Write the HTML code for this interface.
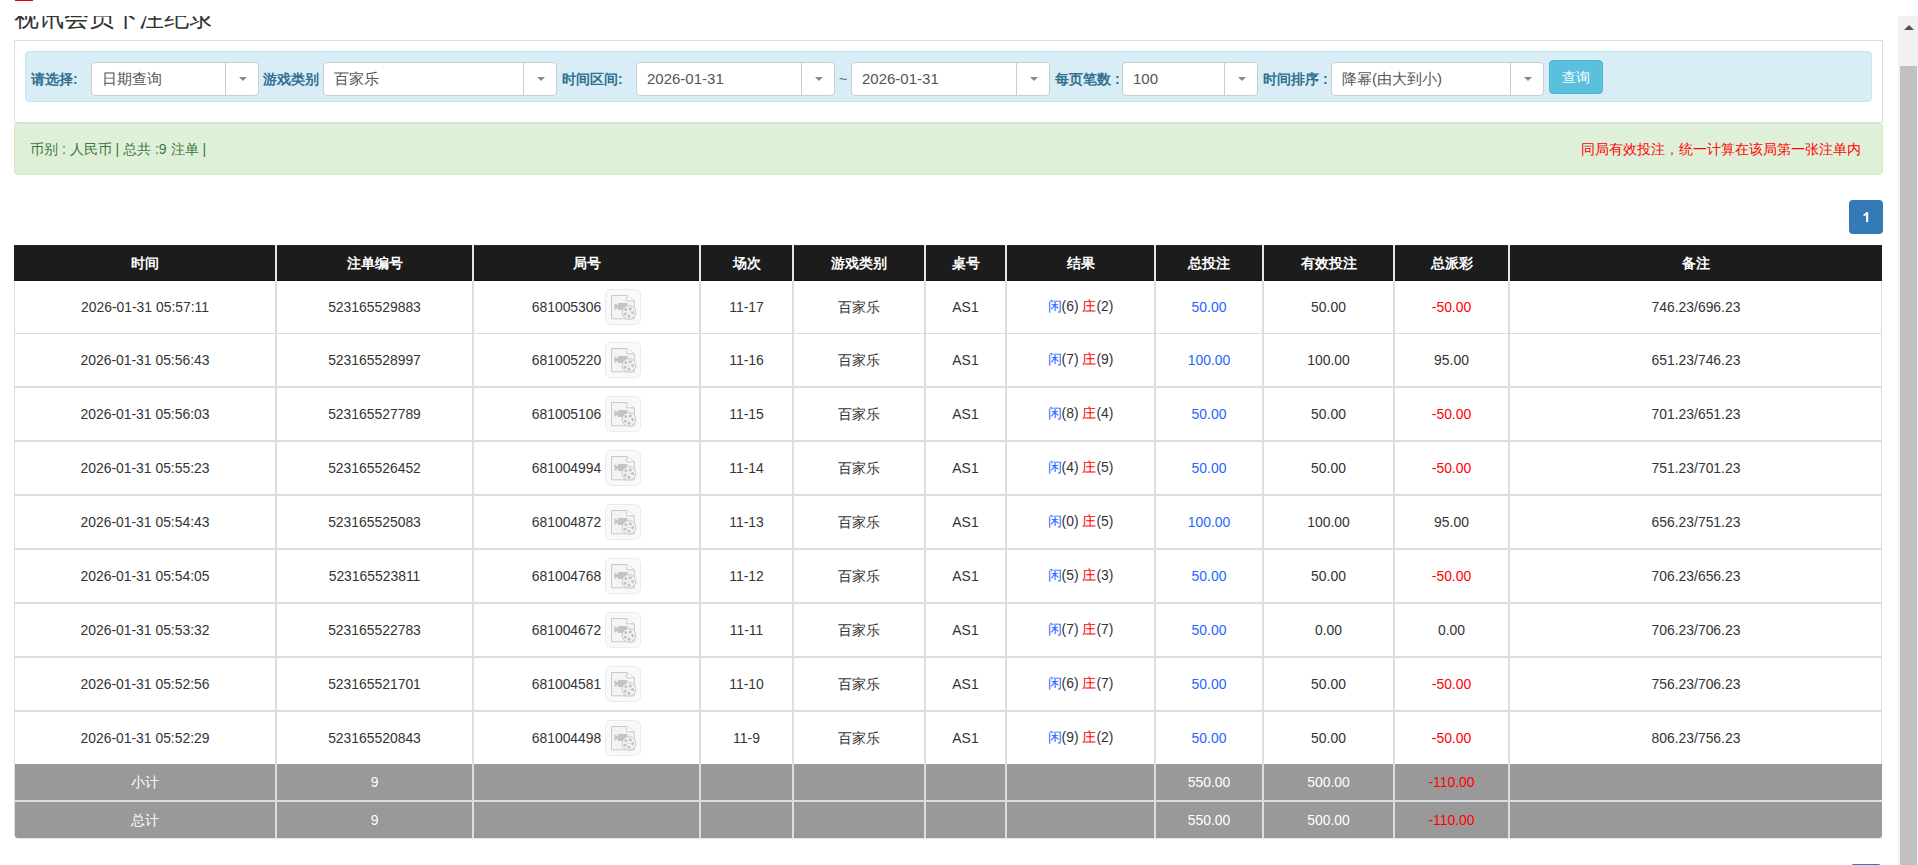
<!DOCTYPE html>
<html><head><meta charset="utf-8"><title>视讯会员下注纪录</title>
<style>
*{box-sizing:border-box;margin:0;padding:0}
html,body{width:1918px;height:865px;overflow:hidden;background:#fff}
body{position:relative;font-family:"Liberation Sans", sans-serif;color:#333}
.a{position:absolute}
.sel{position:absolute;top:62px;height:34px;background:#fff;border:1px solid #ccc;border-radius:4px}
.sel .t{position:absolute;left:10px;top:0;line-height:31px;font-size:15px;color:#555;white-space:nowrap}
.sel .d{position:absolute;top:0;bottom:0;width:1px;background:#ccc}
.sel .ar{position:absolute;top:14px;width:0;height:0;border-left:4px solid transparent;border-right:4px solid transparent;border-top:4px solid #888}
.lbl{position:absolute;top:62px;line-height:34px;font-size:14px;font-weight:bold;color:#31708f;white-space:nowrap}
.c{position:absolute;display:flex;align-items:center;justify-content:center;font-size:13.9px;white-space:nowrap;color:#333}
.h{color:#fff;font-weight:bold;font-size:14px;padding-top:2px}
.g{color:#fff}
.bl{color:#1f66ff}
.rd{color:#f00}
.vl{position:absolute;width:2px;background:#ddd}
.hl{position:absolute;background:#ddd}
</style></head><body>

<div class="a" style="left:15px;top:0;width:18px;height:1px;background:#d9001b"></div>
<div class="a" style="left:0;top:16px;width:1898px;height:30px;overflow:hidden"><div class="a" style="left:14px;top:-19px;font-size:25px;line-height:40px;color:#333;font-weight:300;white-space:nowrap">视讯会员下注纪录</div></div>
<div class="a" style="left:14px;top:40px;width:1869px;height:83px;border:1px solid #ddd;background:#fff"></div>
<div class="a" style="left:25px;top:51px;width:1847px;height:51px;border:1px solid #bce8f1;background:#d9edf7;border-radius:4px"></div>
<div class="lbl" style="left:31px">请选择:</div>
<div class="lbl" style="left:263px">游戏类别</div>
<div class="lbl" style="left:562px">时间区间:</div>
<div class="lbl" style="left:1055px">每页笔数 :</div>
<div class="lbl" style="left:1263px">时间排序 :</div>
<div class="lbl" style="left:839px;font-weight:normal;font-size:14px">~</div>
<div class="sel" style="left:91px;width:168px"><span class="t">日期查询</span><span class="d" style="left:133px"></span><span class="ar" style="left:147px"></span></div>
<div class="sel" style="left:323px;width:234px"><span class="t">百家乐</span><span class="d" style="left:199px"></span><span class="ar" style="left:213px"></span></div>
<div class="sel" style="left:636px;width:199px"><span class="t">2026-01-31</span><span class="d" style="left:164px"></span><span class="ar" style="left:178px"></span></div>
<div class="sel" style="left:851px;width:199px"><span class="t">2026-01-31</span><span class="d" style="left:164px"></span><span class="ar" style="left:178px"></span></div>
<div class="sel" style="left:1122px;width:136px"><span class="t">100</span><span class="d" style="left:101px"></span><span class="ar" style="left:115px"></span></div>
<div class="sel" style="left:1331px;width:213px"><span class="t">降幂(由大到小)</span><span class="d" style="left:178px"></span><span class="ar" style="left:192px"></span></div>
<div class="a" style="left:1549px;top:60px;width:54px;height:34px;background:#5bc0de;border:1px solid #46b8da;border-radius:4px;color:#fff;font-size:14px;line-height:32px;text-align:center">查询</div>
<div class="a" style="left:14px;top:123px;width:1869px;height:52px;background:#dff0d8;border:1px solid #d6e9c6;border-radius:4px"></div>
<div class="a" style="left:30px;top:123px;line-height:52px;font-size:14px;color:#3c763d;white-space:nowrap">币别 : 人民币 | 总共 :9 注单 |</div>
<div class="a" style="right:57px;top:123px;line-height:52px;font-size:14px;color:#f00;white-space:nowrap">同局有效投注，统一计算在该局第一张注单内</div>
<div class="a" style="left:1849px;top:200px;width:34px;height:34px;background:#337ab7;border-radius:4px"><svg class="a" style="left:0;top:0" width="34" height="34"><path d="M17.2 12h2v10h-2.1v-7.1c-0.8 0.7-1.6 1.1-2.6 1.4v-1.9c1.2-0.5 2.1-1.3 2.7-2.4z" fill="#fff"/></svg></div>
<div class="a" style="left:14px;top:245px;width:1868px;height:36px;background:#1c1c1c;border-top:1px solid #2a2a2a;border-bottom:1px solid #151515"></div>
<div class="vl" style="left:275px;top:245px;height:36px;background:#e6e6e6"></div>
<div class="vl" style="left:472px;top:245px;height:36px;background:#e6e6e6"></div>
<div class="vl" style="left:699px;top:245px;height:36px;background:#e6e6e6"></div>
<div class="vl" style="left:792px;top:245px;height:36px;background:#e6e6e6"></div>
<div class="vl" style="left:924px;top:245px;height:36px;background:#e6e6e6"></div>
<div class="vl" style="left:1005px;top:245px;height:36px;background:#e6e6e6"></div>
<div class="vl" style="left:1154px;top:245px;height:36px;background:#e6e6e6"></div>
<div class="vl" style="left:1262px;top:245px;height:36px;background:#e6e6e6"></div>
<div class="vl" style="left:1393px;top:245px;height:36px;background:#e6e6e6"></div>
<div class="vl" style="left:1508px;top:245px;height:36px;background:#e6e6e6"></div>
<div class="c h" style="left:15px;top:245px;width:260px;height:36px">时间</div>
<div class="c h" style="left:277px;top:245px;width:195px;height:36px">注单编号</div>
<div class="c h" style="left:474px;top:245px;width:225px;height:36px">局号</div>
<div class="c h" style="left:701px;top:245px;width:91px;height:36px">场次</div>
<div class="c h" style="left:794px;top:245px;width:130px;height:36px">游戏类别</div>
<div class="c h" style="left:926px;top:245px;width:79px;height:36px">桌号</div>
<div class="c h" style="left:1007px;top:245px;width:147px;height:36px">结果</div>
<div class="c h" style="left:1156px;top:245px;width:106px;height:36px">总投注</div>
<div class="c h" style="left:1264px;top:245px;width:129px;height:36px">有效投注</div>
<div class="c h" style="left:1395px;top:245px;width:113px;height:36px">总派彩</div>
<div class="c h" style="left:1510px;top:245px;width:372px;height:36px">备注</div>
<div class="a" style="left:14px;top:281px;width:1868px;height:483px;border-left:1px solid #ddd;border-right:1px solid #ddd;background:#fff"></div>
<div class="hl" style="left:14px;top:333px;width:1868px;height:1px"></div>
<div class="hl" style="left:14px;top:386px;width:1868px;height:2px"></div>
<div class="hl" style="left:14px;top:440px;width:1868px;height:2px"></div>
<div class="hl" style="left:14px;top:494px;width:1868px;height:2px"></div>
<div class="hl" style="left:14px;top:548px;width:1868px;height:2px"></div>
<div class="hl" style="left:14px;top:602px;width:1868px;height:2px"></div>
<div class="hl" style="left:14px;top:656px;width:1868px;height:2px"></div>
<div class="hl" style="left:14px;top:710px;width:1868px;height:2px"></div>
<div class="vl" style="left:275px;top:281px;height:483px"></div>
<div class="vl" style="left:472px;top:281px;height:483px"></div>
<div class="vl" style="left:699px;top:281px;height:483px"></div>
<div class="vl" style="left:792px;top:281px;height:483px"></div>
<div class="vl" style="left:924px;top:281px;height:483px"></div>
<div class="vl" style="left:1005px;top:281px;height:483px"></div>
<div class="vl" style="left:1154px;top:281px;height:483px"></div>
<div class="vl" style="left:1262px;top:281px;height:483px"></div>
<div class="vl" style="left:1393px;top:281px;height:483px"></div>
<div class="vl" style="left:1508px;top:281px;height:483px"></div>
<div class="c" style="left:15px;top:281px;width:260px;height:52px"><span style="display:flex;align-items:center">2026-01-31 05:57:11</span></div>
<div class="c" style="left:277px;top:281px;width:195px;height:52px"><span style="display:flex;align-items:center">523165529883</span></div>
<div class="c" style="left:474px;top:281px;width:225px;height:52px"><span style="display:flex;align-items:center"><span>681005306</span><span style="display:inline-block;width:4px"></span><svg width="36" height="36" viewBox="0 0 36 36" style="display:block"><rect x="0.5" y="0.5" width="35" height="35" rx="5" fill="#f9f9f9" stroke="#ebebeb"/>
<path d="M6.5 6.5h15.3l7.5 5.3v18h-22.8z" fill="#f4f4f4" stroke="#c9c9c9"/>
<path d="M21.8 6.5v5.3h7.5" fill="#fdfdfd" stroke="#c9c9c9"/>
<path d="M9.5 14.2L13 16.6V13.9H22.4V21H13V18.8L9.5 21z" fill="#c4c4c4"/>
<circle cx="24" cy="23.4" r="6.8" fill="#f4f4f4" stroke="#c9c9c9"/>
<circle cx="20.9" cy="20.6" r="1.6" fill="#c4c4c4"/><circle cx="25.3" cy="19.9" r="1.6" fill="#c4c4c4"/><circle cx="27.6" cy="23.6" r="1.6" fill="#c4c4c4"/><circle cx="20.2" cy="25.1" r="1.6" fill="#c4c4c4"/><circle cx="24" cy="27.2" r="1.6" fill="#c4c4c4"/><circle cx="23.5" cy="23.4" r="0.6" fill="#c4c4c4"/>
</svg></span></div>
<div class="c" style="left:701px;top:281px;width:91px;height:52px"><span style="display:flex;align-items:center">11-17</span></div>
<div class="c" style="left:794px;top:281px;width:130px;height:52px"><span style="display:flex;align-items:center"><span style="padding-top:1px">百家乐</span></span></div>
<div class="c" style="left:926px;top:281px;width:79px;height:52px"><span style="display:flex;align-items:center">AS1</span></div>
<div class="c" style="left:1007px;top:281px;width:147px;height:52px"><span style="display:flex;align-items:center"><span><span class="bl">闲</span>(6) <span class="rd">庄</span>(2)</span></span></div>
<div class="c" style="left:1156px;top:281px;width:106px;height:52px"><span style="display:flex;align-items:center"><span class="bl">50.00</span></span></div>
<div class="c" style="left:1264px;top:281px;width:129px;height:52px"><span style="display:flex;align-items:center">50.00</span></div>
<div class="c" style="left:1395px;top:281px;width:113px;height:52px"><span style="display:flex;align-items:center"><span class="rd">-50.00</span></span></div>
<div class="c" style="left:1510px;top:281px;width:372px;height:52px"><span style="display:flex;align-items:center">746.23/696.23</span></div>
<div class="c" style="left:15px;top:334px;width:260px;height:52px"><span style="display:flex;align-items:center">2026-01-31 05:56:43</span></div>
<div class="c" style="left:277px;top:334px;width:195px;height:52px"><span style="display:flex;align-items:center">523165528997</span></div>
<div class="c" style="left:474px;top:334px;width:225px;height:52px"><span style="display:flex;align-items:center"><span>681005220</span><span style="display:inline-block;width:4px"></span><svg width="36" height="36" viewBox="0 0 36 36" style="display:block"><rect x="0.5" y="0.5" width="35" height="35" rx="5" fill="#f9f9f9" stroke="#ebebeb"/>
<path d="M6.5 6.5h15.3l7.5 5.3v18h-22.8z" fill="#f4f4f4" stroke="#c9c9c9"/>
<path d="M21.8 6.5v5.3h7.5" fill="#fdfdfd" stroke="#c9c9c9"/>
<path d="M9.5 14.2L13 16.6V13.9H22.4V21H13V18.8L9.5 21z" fill="#c4c4c4"/>
<circle cx="24" cy="23.4" r="6.8" fill="#f4f4f4" stroke="#c9c9c9"/>
<circle cx="20.9" cy="20.6" r="1.6" fill="#c4c4c4"/><circle cx="25.3" cy="19.9" r="1.6" fill="#c4c4c4"/><circle cx="27.6" cy="23.6" r="1.6" fill="#c4c4c4"/><circle cx="20.2" cy="25.1" r="1.6" fill="#c4c4c4"/><circle cx="24" cy="27.2" r="1.6" fill="#c4c4c4"/><circle cx="23.5" cy="23.4" r="0.6" fill="#c4c4c4"/>
</svg></span></div>
<div class="c" style="left:701px;top:334px;width:91px;height:52px"><span style="display:flex;align-items:center">11-16</span></div>
<div class="c" style="left:794px;top:334px;width:130px;height:52px"><span style="display:flex;align-items:center"><span style="padding-top:1px">百家乐</span></span></div>
<div class="c" style="left:926px;top:334px;width:79px;height:52px"><span style="display:flex;align-items:center">AS1</span></div>
<div class="c" style="left:1007px;top:334px;width:147px;height:52px"><span style="display:flex;align-items:center"><span><span class="bl">闲</span>(7) <span class="rd">庄</span>(9)</span></span></div>
<div class="c" style="left:1156px;top:334px;width:106px;height:52px"><span style="display:flex;align-items:center"><span class="bl">100.00</span></span></div>
<div class="c" style="left:1264px;top:334px;width:129px;height:52px"><span style="display:flex;align-items:center">100.00</span></div>
<div class="c" style="left:1395px;top:334px;width:113px;height:52px"><span style="display:flex;align-items:center">95.00</span></div>
<div class="c" style="left:1510px;top:334px;width:372px;height:52px"><span style="display:flex;align-items:center">651.23/746.23</span></div>
<div class="c" style="left:15px;top:388px;width:260px;height:52px"><span style="display:flex;align-items:center">2026-01-31 05:56:03</span></div>
<div class="c" style="left:277px;top:388px;width:195px;height:52px"><span style="display:flex;align-items:center">523165527789</span></div>
<div class="c" style="left:474px;top:388px;width:225px;height:52px"><span style="display:flex;align-items:center"><span>681005106</span><span style="display:inline-block;width:4px"></span><svg width="36" height="36" viewBox="0 0 36 36" style="display:block"><rect x="0.5" y="0.5" width="35" height="35" rx="5" fill="#f9f9f9" stroke="#ebebeb"/>
<path d="M6.5 6.5h15.3l7.5 5.3v18h-22.8z" fill="#f4f4f4" stroke="#c9c9c9"/>
<path d="M21.8 6.5v5.3h7.5" fill="#fdfdfd" stroke="#c9c9c9"/>
<path d="M9.5 14.2L13 16.6V13.9H22.4V21H13V18.8L9.5 21z" fill="#c4c4c4"/>
<circle cx="24" cy="23.4" r="6.8" fill="#f4f4f4" stroke="#c9c9c9"/>
<circle cx="20.9" cy="20.6" r="1.6" fill="#c4c4c4"/><circle cx="25.3" cy="19.9" r="1.6" fill="#c4c4c4"/><circle cx="27.6" cy="23.6" r="1.6" fill="#c4c4c4"/><circle cx="20.2" cy="25.1" r="1.6" fill="#c4c4c4"/><circle cx="24" cy="27.2" r="1.6" fill="#c4c4c4"/><circle cx="23.5" cy="23.4" r="0.6" fill="#c4c4c4"/>
</svg></span></div>
<div class="c" style="left:701px;top:388px;width:91px;height:52px"><span style="display:flex;align-items:center">11-15</span></div>
<div class="c" style="left:794px;top:388px;width:130px;height:52px"><span style="display:flex;align-items:center"><span style="padding-top:1px">百家乐</span></span></div>
<div class="c" style="left:926px;top:388px;width:79px;height:52px"><span style="display:flex;align-items:center">AS1</span></div>
<div class="c" style="left:1007px;top:388px;width:147px;height:52px"><span style="display:flex;align-items:center"><span><span class="bl">闲</span>(8) <span class="rd">庄</span>(4)</span></span></div>
<div class="c" style="left:1156px;top:388px;width:106px;height:52px"><span style="display:flex;align-items:center"><span class="bl">50.00</span></span></div>
<div class="c" style="left:1264px;top:388px;width:129px;height:52px"><span style="display:flex;align-items:center">50.00</span></div>
<div class="c" style="left:1395px;top:388px;width:113px;height:52px"><span style="display:flex;align-items:center"><span class="rd">-50.00</span></span></div>
<div class="c" style="left:1510px;top:388px;width:372px;height:52px"><span style="display:flex;align-items:center">701.23/651.23</span></div>
<div class="c" style="left:15px;top:442px;width:260px;height:52px"><span style="display:flex;align-items:center">2026-01-31 05:55:23</span></div>
<div class="c" style="left:277px;top:442px;width:195px;height:52px"><span style="display:flex;align-items:center">523165526452</span></div>
<div class="c" style="left:474px;top:442px;width:225px;height:52px"><span style="display:flex;align-items:center"><span>681004994</span><span style="display:inline-block;width:4px"></span><svg width="36" height="36" viewBox="0 0 36 36" style="display:block"><rect x="0.5" y="0.5" width="35" height="35" rx="5" fill="#f9f9f9" stroke="#ebebeb"/>
<path d="M6.5 6.5h15.3l7.5 5.3v18h-22.8z" fill="#f4f4f4" stroke="#c9c9c9"/>
<path d="M21.8 6.5v5.3h7.5" fill="#fdfdfd" stroke="#c9c9c9"/>
<path d="M9.5 14.2L13 16.6V13.9H22.4V21H13V18.8L9.5 21z" fill="#c4c4c4"/>
<circle cx="24" cy="23.4" r="6.8" fill="#f4f4f4" stroke="#c9c9c9"/>
<circle cx="20.9" cy="20.6" r="1.6" fill="#c4c4c4"/><circle cx="25.3" cy="19.9" r="1.6" fill="#c4c4c4"/><circle cx="27.6" cy="23.6" r="1.6" fill="#c4c4c4"/><circle cx="20.2" cy="25.1" r="1.6" fill="#c4c4c4"/><circle cx="24" cy="27.2" r="1.6" fill="#c4c4c4"/><circle cx="23.5" cy="23.4" r="0.6" fill="#c4c4c4"/>
</svg></span></div>
<div class="c" style="left:701px;top:442px;width:91px;height:52px"><span style="display:flex;align-items:center">11-14</span></div>
<div class="c" style="left:794px;top:442px;width:130px;height:52px"><span style="display:flex;align-items:center"><span style="padding-top:1px">百家乐</span></span></div>
<div class="c" style="left:926px;top:442px;width:79px;height:52px"><span style="display:flex;align-items:center">AS1</span></div>
<div class="c" style="left:1007px;top:442px;width:147px;height:52px"><span style="display:flex;align-items:center"><span><span class="bl">闲</span>(4) <span class="rd">庄</span>(5)</span></span></div>
<div class="c" style="left:1156px;top:442px;width:106px;height:52px"><span style="display:flex;align-items:center"><span class="bl">50.00</span></span></div>
<div class="c" style="left:1264px;top:442px;width:129px;height:52px"><span style="display:flex;align-items:center">50.00</span></div>
<div class="c" style="left:1395px;top:442px;width:113px;height:52px"><span style="display:flex;align-items:center"><span class="rd">-50.00</span></span></div>
<div class="c" style="left:1510px;top:442px;width:372px;height:52px"><span style="display:flex;align-items:center">751.23/701.23</span></div>
<div class="c" style="left:15px;top:496px;width:260px;height:52px"><span style="display:flex;align-items:center">2026-01-31 05:54:43</span></div>
<div class="c" style="left:277px;top:496px;width:195px;height:52px"><span style="display:flex;align-items:center">523165525083</span></div>
<div class="c" style="left:474px;top:496px;width:225px;height:52px"><span style="display:flex;align-items:center"><span>681004872</span><span style="display:inline-block;width:4px"></span><svg width="36" height="36" viewBox="0 0 36 36" style="display:block"><rect x="0.5" y="0.5" width="35" height="35" rx="5" fill="#f9f9f9" stroke="#ebebeb"/>
<path d="M6.5 6.5h15.3l7.5 5.3v18h-22.8z" fill="#f4f4f4" stroke="#c9c9c9"/>
<path d="M21.8 6.5v5.3h7.5" fill="#fdfdfd" stroke="#c9c9c9"/>
<path d="M9.5 14.2L13 16.6V13.9H22.4V21H13V18.8L9.5 21z" fill="#c4c4c4"/>
<circle cx="24" cy="23.4" r="6.8" fill="#f4f4f4" stroke="#c9c9c9"/>
<circle cx="20.9" cy="20.6" r="1.6" fill="#c4c4c4"/><circle cx="25.3" cy="19.9" r="1.6" fill="#c4c4c4"/><circle cx="27.6" cy="23.6" r="1.6" fill="#c4c4c4"/><circle cx="20.2" cy="25.1" r="1.6" fill="#c4c4c4"/><circle cx="24" cy="27.2" r="1.6" fill="#c4c4c4"/><circle cx="23.5" cy="23.4" r="0.6" fill="#c4c4c4"/>
</svg></span></div>
<div class="c" style="left:701px;top:496px;width:91px;height:52px"><span style="display:flex;align-items:center">11-13</span></div>
<div class="c" style="left:794px;top:496px;width:130px;height:52px"><span style="display:flex;align-items:center"><span style="padding-top:1px">百家乐</span></span></div>
<div class="c" style="left:926px;top:496px;width:79px;height:52px"><span style="display:flex;align-items:center">AS1</span></div>
<div class="c" style="left:1007px;top:496px;width:147px;height:52px"><span style="display:flex;align-items:center"><span><span class="bl">闲</span>(0) <span class="rd">庄</span>(5)</span></span></div>
<div class="c" style="left:1156px;top:496px;width:106px;height:52px"><span style="display:flex;align-items:center"><span class="bl">100.00</span></span></div>
<div class="c" style="left:1264px;top:496px;width:129px;height:52px"><span style="display:flex;align-items:center">100.00</span></div>
<div class="c" style="left:1395px;top:496px;width:113px;height:52px"><span style="display:flex;align-items:center">95.00</span></div>
<div class="c" style="left:1510px;top:496px;width:372px;height:52px"><span style="display:flex;align-items:center">656.23/751.23</span></div>
<div class="c" style="left:15px;top:550px;width:260px;height:52px"><span style="display:flex;align-items:center">2026-01-31 05:54:05</span></div>
<div class="c" style="left:277px;top:550px;width:195px;height:52px"><span style="display:flex;align-items:center">523165523811</span></div>
<div class="c" style="left:474px;top:550px;width:225px;height:52px"><span style="display:flex;align-items:center"><span>681004768</span><span style="display:inline-block;width:4px"></span><svg width="36" height="36" viewBox="0 0 36 36" style="display:block"><rect x="0.5" y="0.5" width="35" height="35" rx="5" fill="#f9f9f9" stroke="#ebebeb"/>
<path d="M6.5 6.5h15.3l7.5 5.3v18h-22.8z" fill="#f4f4f4" stroke="#c9c9c9"/>
<path d="M21.8 6.5v5.3h7.5" fill="#fdfdfd" stroke="#c9c9c9"/>
<path d="M9.5 14.2L13 16.6V13.9H22.4V21H13V18.8L9.5 21z" fill="#c4c4c4"/>
<circle cx="24" cy="23.4" r="6.8" fill="#f4f4f4" stroke="#c9c9c9"/>
<circle cx="20.9" cy="20.6" r="1.6" fill="#c4c4c4"/><circle cx="25.3" cy="19.9" r="1.6" fill="#c4c4c4"/><circle cx="27.6" cy="23.6" r="1.6" fill="#c4c4c4"/><circle cx="20.2" cy="25.1" r="1.6" fill="#c4c4c4"/><circle cx="24" cy="27.2" r="1.6" fill="#c4c4c4"/><circle cx="23.5" cy="23.4" r="0.6" fill="#c4c4c4"/>
</svg></span></div>
<div class="c" style="left:701px;top:550px;width:91px;height:52px"><span style="display:flex;align-items:center">11-12</span></div>
<div class="c" style="left:794px;top:550px;width:130px;height:52px"><span style="display:flex;align-items:center"><span style="padding-top:1px">百家乐</span></span></div>
<div class="c" style="left:926px;top:550px;width:79px;height:52px"><span style="display:flex;align-items:center">AS1</span></div>
<div class="c" style="left:1007px;top:550px;width:147px;height:52px"><span style="display:flex;align-items:center"><span><span class="bl">闲</span>(5) <span class="rd">庄</span>(3)</span></span></div>
<div class="c" style="left:1156px;top:550px;width:106px;height:52px"><span style="display:flex;align-items:center"><span class="bl">50.00</span></span></div>
<div class="c" style="left:1264px;top:550px;width:129px;height:52px"><span style="display:flex;align-items:center">50.00</span></div>
<div class="c" style="left:1395px;top:550px;width:113px;height:52px"><span style="display:flex;align-items:center"><span class="rd">-50.00</span></span></div>
<div class="c" style="left:1510px;top:550px;width:372px;height:52px"><span style="display:flex;align-items:center">706.23/656.23</span></div>
<div class="c" style="left:15px;top:604px;width:260px;height:52px"><span style="display:flex;align-items:center">2026-01-31 05:53:32</span></div>
<div class="c" style="left:277px;top:604px;width:195px;height:52px"><span style="display:flex;align-items:center">523165522783</span></div>
<div class="c" style="left:474px;top:604px;width:225px;height:52px"><span style="display:flex;align-items:center"><span>681004672</span><span style="display:inline-block;width:4px"></span><svg width="36" height="36" viewBox="0 0 36 36" style="display:block"><rect x="0.5" y="0.5" width="35" height="35" rx="5" fill="#f9f9f9" stroke="#ebebeb"/>
<path d="M6.5 6.5h15.3l7.5 5.3v18h-22.8z" fill="#f4f4f4" stroke="#c9c9c9"/>
<path d="M21.8 6.5v5.3h7.5" fill="#fdfdfd" stroke="#c9c9c9"/>
<path d="M9.5 14.2L13 16.6V13.9H22.4V21H13V18.8L9.5 21z" fill="#c4c4c4"/>
<circle cx="24" cy="23.4" r="6.8" fill="#f4f4f4" stroke="#c9c9c9"/>
<circle cx="20.9" cy="20.6" r="1.6" fill="#c4c4c4"/><circle cx="25.3" cy="19.9" r="1.6" fill="#c4c4c4"/><circle cx="27.6" cy="23.6" r="1.6" fill="#c4c4c4"/><circle cx="20.2" cy="25.1" r="1.6" fill="#c4c4c4"/><circle cx="24" cy="27.2" r="1.6" fill="#c4c4c4"/><circle cx="23.5" cy="23.4" r="0.6" fill="#c4c4c4"/>
</svg></span></div>
<div class="c" style="left:701px;top:604px;width:91px;height:52px"><span style="display:flex;align-items:center">11-11</span></div>
<div class="c" style="left:794px;top:604px;width:130px;height:52px"><span style="display:flex;align-items:center"><span style="padding-top:1px">百家乐</span></span></div>
<div class="c" style="left:926px;top:604px;width:79px;height:52px"><span style="display:flex;align-items:center">AS1</span></div>
<div class="c" style="left:1007px;top:604px;width:147px;height:52px"><span style="display:flex;align-items:center"><span><span class="bl">闲</span>(7) <span class="rd">庄</span>(7)</span></span></div>
<div class="c" style="left:1156px;top:604px;width:106px;height:52px"><span style="display:flex;align-items:center"><span class="bl">50.00</span></span></div>
<div class="c" style="left:1264px;top:604px;width:129px;height:52px"><span style="display:flex;align-items:center">0.00</span></div>
<div class="c" style="left:1395px;top:604px;width:113px;height:52px"><span style="display:flex;align-items:center">0.00</span></div>
<div class="c" style="left:1510px;top:604px;width:372px;height:52px"><span style="display:flex;align-items:center">706.23/706.23</span></div>
<div class="c" style="left:15px;top:658px;width:260px;height:52px"><span style="display:flex;align-items:center">2026-01-31 05:52:56</span></div>
<div class="c" style="left:277px;top:658px;width:195px;height:52px"><span style="display:flex;align-items:center">523165521701</span></div>
<div class="c" style="left:474px;top:658px;width:225px;height:52px"><span style="display:flex;align-items:center"><span>681004581</span><span style="display:inline-block;width:4px"></span><svg width="36" height="36" viewBox="0 0 36 36" style="display:block"><rect x="0.5" y="0.5" width="35" height="35" rx="5" fill="#f9f9f9" stroke="#ebebeb"/>
<path d="M6.5 6.5h15.3l7.5 5.3v18h-22.8z" fill="#f4f4f4" stroke="#c9c9c9"/>
<path d="M21.8 6.5v5.3h7.5" fill="#fdfdfd" stroke="#c9c9c9"/>
<path d="M9.5 14.2L13 16.6V13.9H22.4V21H13V18.8L9.5 21z" fill="#c4c4c4"/>
<circle cx="24" cy="23.4" r="6.8" fill="#f4f4f4" stroke="#c9c9c9"/>
<circle cx="20.9" cy="20.6" r="1.6" fill="#c4c4c4"/><circle cx="25.3" cy="19.9" r="1.6" fill="#c4c4c4"/><circle cx="27.6" cy="23.6" r="1.6" fill="#c4c4c4"/><circle cx="20.2" cy="25.1" r="1.6" fill="#c4c4c4"/><circle cx="24" cy="27.2" r="1.6" fill="#c4c4c4"/><circle cx="23.5" cy="23.4" r="0.6" fill="#c4c4c4"/>
</svg></span></div>
<div class="c" style="left:701px;top:658px;width:91px;height:52px"><span style="display:flex;align-items:center">11-10</span></div>
<div class="c" style="left:794px;top:658px;width:130px;height:52px"><span style="display:flex;align-items:center"><span style="padding-top:1px">百家乐</span></span></div>
<div class="c" style="left:926px;top:658px;width:79px;height:52px"><span style="display:flex;align-items:center">AS1</span></div>
<div class="c" style="left:1007px;top:658px;width:147px;height:52px"><span style="display:flex;align-items:center"><span><span class="bl">闲</span>(6) <span class="rd">庄</span>(7)</span></span></div>
<div class="c" style="left:1156px;top:658px;width:106px;height:52px"><span style="display:flex;align-items:center"><span class="bl">50.00</span></span></div>
<div class="c" style="left:1264px;top:658px;width:129px;height:52px"><span style="display:flex;align-items:center">50.00</span></div>
<div class="c" style="left:1395px;top:658px;width:113px;height:52px"><span style="display:flex;align-items:center"><span class="rd">-50.00</span></span></div>
<div class="c" style="left:1510px;top:658px;width:372px;height:52px"><span style="display:flex;align-items:center">756.23/706.23</span></div>
<div class="c" style="left:15px;top:712px;width:260px;height:52px"><span style="display:flex;align-items:center">2026-01-31 05:52:29</span></div>
<div class="c" style="left:277px;top:712px;width:195px;height:52px"><span style="display:flex;align-items:center">523165520843</span></div>
<div class="c" style="left:474px;top:712px;width:225px;height:52px"><span style="display:flex;align-items:center"><span>681004498</span><span style="display:inline-block;width:4px"></span><svg width="36" height="36" viewBox="0 0 36 36" style="display:block"><rect x="0.5" y="0.5" width="35" height="35" rx="5" fill="#f9f9f9" stroke="#ebebeb"/>
<path d="M6.5 6.5h15.3l7.5 5.3v18h-22.8z" fill="#f4f4f4" stroke="#c9c9c9"/>
<path d="M21.8 6.5v5.3h7.5" fill="#fdfdfd" stroke="#c9c9c9"/>
<path d="M9.5 14.2L13 16.6V13.9H22.4V21H13V18.8L9.5 21z" fill="#c4c4c4"/>
<circle cx="24" cy="23.4" r="6.8" fill="#f4f4f4" stroke="#c9c9c9"/>
<circle cx="20.9" cy="20.6" r="1.6" fill="#c4c4c4"/><circle cx="25.3" cy="19.9" r="1.6" fill="#c4c4c4"/><circle cx="27.6" cy="23.6" r="1.6" fill="#c4c4c4"/><circle cx="20.2" cy="25.1" r="1.6" fill="#c4c4c4"/><circle cx="24" cy="27.2" r="1.6" fill="#c4c4c4"/><circle cx="23.5" cy="23.4" r="0.6" fill="#c4c4c4"/>
</svg></span></div>
<div class="c" style="left:701px;top:712px;width:91px;height:52px"><span style="display:flex;align-items:center">11-9</span></div>
<div class="c" style="left:794px;top:712px;width:130px;height:52px"><span style="display:flex;align-items:center"><span style="padding-top:1px">百家乐</span></span></div>
<div class="c" style="left:926px;top:712px;width:79px;height:52px"><span style="display:flex;align-items:center">AS1</span></div>
<div class="c" style="left:1007px;top:712px;width:147px;height:52px"><span style="display:flex;align-items:center"><span><span class="bl">闲</span>(9) <span class="rd">庄</span>(2)</span></span></div>
<div class="c" style="left:1156px;top:712px;width:106px;height:52px"><span style="display:flex;align-items:center"><span class="bl">50.00</span></span></div>
<div class="c" style="left:1264px;top:712px;width:129px;height:52px"><span style="display:flex;align-items:center">50.00</span></div>
<div class="c" style="left:1395px;top:712px;width:113px;height:52px"><span style="display:flex;align-items:center"><span class="rd">-50.00</span></span></div>
<div class="c" style="left:1510px;top:712px;width:372px;height:52px"><span style="display:flex;align-items:center">806.23/756.23</span></div>
<div class="a" style="left:14px;top:764px;width:1px;height:72px;background:#ddd"></div>
<div class="a" style="left:15px;top:764px;width:1867px;height:74px;background:#999;border-radius:0 0 3px 3px;box-shadow:0 1px 1px rgba(0,0,0,0.12)"></div>
<div class="hl" style="left:15px;top:800px;width:1867px;height:2px"></div>
<div class="vl" style="left:275px;top:764px;height:74px"></div>
<div class="vl" style="left:472px;top:764px;height:74px"></div>
<div class="vl" style="left:699px;top:764px;height:74px"></div>
<div class="vl" style="left:792px;top:764px;height:74px"></div>
<div class="vl" style="left:924px;top:764px;height:74px"></div>
<div class="vl" style="left:1005px;top:764px;height:74px"></div>
<div class="vl" style="left:1154px;top:764px;height:74px"></div>
<div class="vl" style="left:1262px;top:764px;height:74px"></div>
<div class="vl" style="left:1393px;top:764px;height:74px"></div>
<div class="vl" style="left:1508px;top:764px;height:74px"></div>
<div class="c g" style="left:15px;top:764px;width:260px;height:36px;padding-top:2px">小计</div>
<div class="c g" style="left:277px;top:764px;width:195px;height:36px">9</div>
<div class="c g" style="left:1156px;top:764px;width:106px;height:36px">550.00</div>
<div class="c g" style="left:1264px;top:764px;width:129px;height:36px">500.00</div>
<div class="c rd" style="left:1395px;top:764px;width:113px;height:36px">-110.00</div>
<div class="c g" style="left:15px;top:802px;width:260px;height:36px;padding-top:2px">总计</div>
<div class="c g" style="left:277px;top:802px;width:195px;height:36px">9</div>
<div class="c g" style="left:1156px;top:802px;width:106px;height:36px">550.00</div>
<div class="c g" style="left:1264px;top:802px;width:129px;height:36px">500.00</div>
<div class="c rd" style="left:1395px;top:802px;width:113px;height:36px">-110.00</div>
<div class="a" style="left:1851px;top:864px;width:30px;height:10px;background:#337ab7;border-radius:3px"></div>
<div class="a" style="left:1898px;top:16px;width:20px;height:849px;background:#f1f1f1"></div>
<div class="a" style="left:1903.5px;top:25px;width:0;height:0;border-left:5px solid transparent;border-right:5px solid transparent;border-bottom:5px solid #505050"></div>
<div class="a" style="left:1900px;top:66px;width:17px;height:799px;background:#c1c1c1"></div>
</body></html>
